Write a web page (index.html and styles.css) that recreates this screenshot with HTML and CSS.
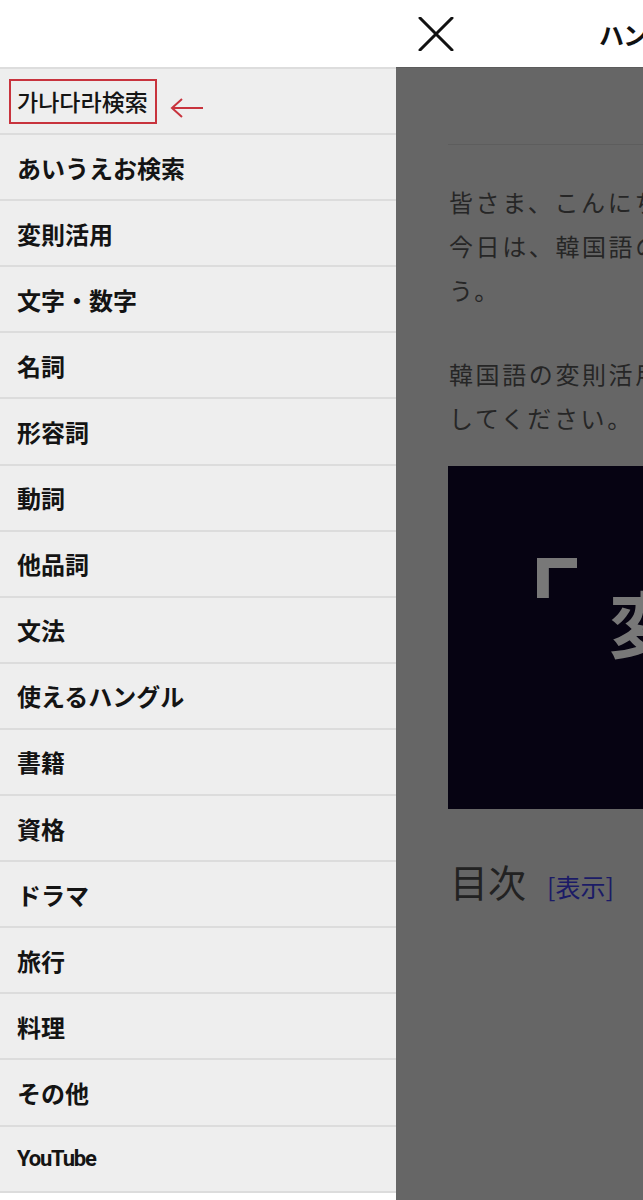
FILE: index.html
```html
<!DOCTYPE html>
<html lang="ja">
<head>
    <meta charset="UTF-8">
    <meta name="viewport" content="width=device-width, initial-scale=1.0">
    <title>ハングルノート</title>
    <link rel="stylesheet" href="styles.css">
</head>
<body>
    <header class="topbar">
        <div class="topbar-spacer"></div>
        <button class="close-btn" aria-label="閉じる">
            <svg width="36" height="34" viewBox="0 0 36 34">
                <path d="M2 1 L34 33 M34 1 L2 33" stroke="#111" stroke-width="3" stroke-linecap="round" fill="none"/>
            </svg>
        </button>
        <h1 class="site-title">ハングルノート</h1>
    </header>

    <div class="layout">
        <!-- Side menu -->
        <nav class="drawer">
            <ul class="menu">
                <li class="menu-item menu-item--marked">
                    <span class="marked-label">가나다라検索</span>
                    <svg class="marked-arrow" width="34" height="20" viewBox="0 0 34 20">
                        <path d="M33 10 H3 M12 1 L2 10 L12 19" stroke="#c8333d" stroke-width="2" fill="none"/>
                    </svg>
                </li>
                <li class="menu-item">あいうえお検索</li>
                <li class="menu-item">変則活用</li>
                <li class="menu-item">文字・数字</li>
                <li class="menu-item">名詞</li>
                <li class="menu-item">形容詞</li>
                <li class="menu-item">動詞</li>
                <li class="menu-item">他品詞</li>
                <li class="menu-item">文法</li>
                <li class="menu-item">使えるハングル</li>
                <li class="menu-item">書籍</li>
                <li class="menu-item">資格</li>
                <li class="menu-item">ドラマ</li>
                <li class="menu-item">旅行</li>
                <li class="menu-item">料理</li>
                <li class="menu-item">その他</li>
                <li class="menu-item menu-item--latin">YouTube</li>
            </ul>
        </nav>

        <!-- Dimmed page behind the menu -->
        <main class="shade">
            <div class="article">
                <hr class="article-rule">
                <p class="article-text">皆さま、こんにちは。<br>今日は、韓国語の変則活用を見ていきましょ<br>う。</p>
                <p class="article-text">韓国語の変則活用について一緒に確認<br>してください。</p>
                <div class="eyecatch">
                    <span class="eyecatch-bracket"><span class="bracket-glyph">「</span></span>
                    <span class="eyecatch-title">変則活用</span>
                </div>
                <div class="toc">
                    <span class="toc-title">目次</span>
                    <a class="toc-toggle" href="#">[表示]</a>
                </div>
            </div>
        </main>
    </div>
</body>
</html>
```

FILE: styles.css
```css
html, body {
    margin: 0;
    padding: 0;
}
body {
    width: 643px;
    height: 1200px;
    overflow: hidden;
    background-color: #fff;
    font-family: "Noto Sans CJK JP", sans-serif;
    color: #111;
}
.topbar {
    height: 67px;
    display: flex;
    align-items: center;
    background-color: #fff;
    white-space: nowrap;
}
.topbar-spacer {
    width: 396px;
    flex-shrink: 0;
}
.close-btn {
    margin-left: 22px;
    padding: 0;
    border: none;
    background: none;
    width: 36px;
    height: 34px;
    flex-shrink: 0;
}
.close-btn svg {
    display: block;
}
.site-title {
    margin: 0 0 0 145px;
    font-size: 25px;
    font-weight: 700;
    letter-spacing: -1px;
}
.layout {
    display: flex;
    height: 1133px;
}
.drawer {
    width: 396px;
    flex-shrink: 0;
    align-self: flex-start;
}
.menu {
    list-style: none;
    margin: 0;
    padding: 0;
    background-color: #eeeeee;
    border-top: 2px solid #dddddd;
}
.menu-item {
    height: 64.1px;
    display: flex;
    align-items: center;
    padding-left: 17px;
    border-bottom: 2px solid #dcdcdc;
    font-size: 24px;
    font-weight: 700;
    color: #141414;
}
.menu-item--latin {
    font-family: Roboto, "Liberation Sans", sans-serif;
    font-size: 22px;
    letter-spacing: -1.2px;
}
.menu-item--marked {
    padding-left: 9px;
}
.marked-label {
    font-family: "Noto Sans CJK KR", sans-serif;
    font-weight: 500;
    font-size: 23px;
    line-height: 41px;
    padding: 0 7px 0 6px;
    border: 2px solid #c8333d;
}
.marked-arrow {
    margin-left: 13px;
    margin-top: 14px;
}
.shade {
    flex: 1;
    background-color: #666666;
    overflow: hidden;
    border-top: 1px solid #5c5c5c;
}
.article {
    width: 600px;
    padding-left: 52px;
}
.article-rule {
    margin: 76px 0 0;
    border: none;
    border-top: 1px solid #5d5d5d;
}
.article-text {
    margin: 35px 0 0 1px;
    font-size: 24px;
    line-height: 44px;
    letter-spacing: 2.6px;
    color: #262626;
    white-space: nowrap;
}
.article-text + .article-text {
    margin-top: 40px;
}
.eyecatch {
    position: relative;
    margin-top: 26px;
    height: 343px;
    background-color: #060312;
    overflow: hidden;
}
.eyecatch-bracket {
    position: absolute;
    left: 84px;
    top: 92px;
    width: 45px;
    height: 40px;
    overflow: hidden;
}
.bracket-glyph {
    position: absolute;
    left: -99px;
    top: -15px;
    font-size: 160px;
    font-weight: 400;
    line-height: 1;
    color: #787878;
}
.eyecatch-title {
    position: absolute;
    left: 161px;
    top: 119px;
    font-size: 72px;
    font-weight: 700;
    line-height: 1;
    color: #787878;
    white-space: nowrap;
}
.toc {
    margin-top: 44px;
    display: flex;
    align-items: baseline;
    padding-left: 2px;
}
.toc-title {
    font-size: 38px;
    font-weight: 400;
    color: #222;
}
.toc-toggle {
    margin-left: 21px;
    font-size: 25px;
    color: #1b1b66;
    text-decoration: none;
}
```
